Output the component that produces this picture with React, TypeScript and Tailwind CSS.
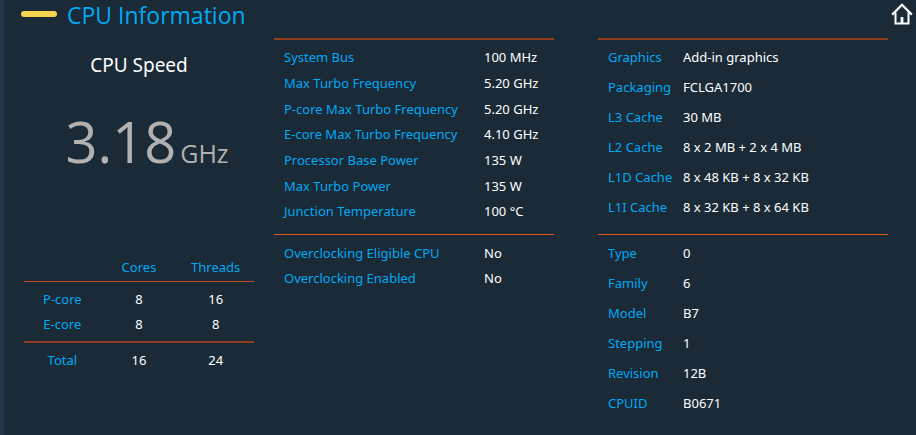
import clsx from "clsx";
import React from "react";

type Item = [label: string, value: string];

const frequencies: Item[] = [
  ["System Bus", "100 MHz"],
  ["Max Turbo Frequency", "5.20 GHz"],
  ["P-core Max Turbo Frequency", "5.20 GHz"],
  ["E-core Max Turbo Frequency", "4.10 GHz"],
  ["Processor Base Power", "135 W"],
  ["Max Turbo Power", "135 W"],
  ["Junction Temperature", "100 °C"],
];

const overclocking: Item[] = [
  ["Overclocking Eligible CPU", "No"],
  ["Overclocking Enabled", "No"],
];

const packaging: Item[] = [
  ["Graphics", "Add-in graphics"],
  ["Packaging", "FCLGA1700"],
  ["L3 Cache", "30 MB"],
  ["L2 Cache", "8 x 2 MB + 2 x 4 MB"],
  ["L1D Cache", "8 x 48 KB + 8 x 32 KB"],
  ["L1I Cache", "8 x 32 KB + 8 x 64 KB"],
];

const identity: Item[] = [
  ["Type", "0"],
  ["Family", "6"],
  ["Model", "B7"],
  ["Stepping", "1"],
  ["Revision", "12B"],
  ["CPUID", "B0671"],
];

const HomeIcon = () => (
  <svg viewBox="0 0 22 22" className="size-[22px]" fill="none" stroke="currentColor" aria-hidden="true">
    <path d="M1.2 11.6 11 1.8l9.8 9.8" strokeWidth="2.2" />
    <path d="M4.5 9.5v10.9h13V9.5" strokeWidth="2" />
    <path d="M9.6 14h2.8v6.4H9.6z" fill="currentColor" stroke="none" />
  </svg>
);

interface InfoListProps {
  items: Item[];
  className?: string;
  rowClassName?: string;
  labelClassName?: string;
}

const InfoList = ({ items, className, rowClassName, labelClassName }: InfoListProps) => (
  <dl className={clsx("flex flex-col pl-[10px]", className)}>
    {items.map(([label, value]) => (
      <div key={label} className={clsx("flex items-center whitespace-nowrap", rowClassName)}>
        <dt className={clsx("shrink-0 text-[#00a9f4]", labelClassName)}>{label}</dt>
        <dd>{value}</dd>
      </div>
    ))}
  </dl>
);

const CoreTable = () => (
  <table className="w-full table-fixed border-separate border-spacing-0 text-center leading-[25px]">
    <thead>
      <tr className="text-[#00a9f4]">
        <td className="border-b border-[#c8501e]"></td>
        <th scope="col" className="border-b border-[#c8501e] pb-px font-normal">Cores</th>
        <th scope="col" className="border-b border-[#c8501e] pb-px font-normal">Threads</th>
      </tr>
    </thead>
    <tbody>
      <tr>
        <th scope="row" className="pt-[5px] font-normal text-[#00a9f4]">P-core</th>
        <td className="pt-[5px]">8</td>
        <td className="pt-[5px]">16</td>
      </tr>
      <tr>
        <th scope="row" className="pb-1 font-normal text-[#00a9f4]">E-core</th>
        <td className="pb-1">8</td>
        <td className="pb-1">8</td>
      </tr>
    </tbody>
    <tfoot>
      <tr>
        <th scope="row" className="border-t-2 border-[#8d3f20] pt-[5px] font-normal text-[#00a9f4]">Total</th>
        <td className="border-t-2 border-[#8d3f20] pt-[5px]">16</td>
        <td className="border-t-2 border-[#8d3f20] pt-[5px]">24</td>
      </tr>
    </tfoot>
  </table>
);

const App = () => {
  return (
    <div className="min-h-screen border-l-4 border-[#25364a] bg-[#1a2a37] font-['Noto_Sans','Open_Sans',sans-serif] text-[13px] text-white">
      <header className="flex h-[38px] items-start pr-[3px] pl-[17px]">
        <span className="mt-[11px] h-[6px] w-9 rounded-full bg-[#f5d44f]"></span>
        <h1 className="ml-[10px] font-['Open_Sans',sans-serif] text-[23px] leading-[30px] text-[#00a9f4]">
          CPU Information
        </h1>
        <button type="button" aria-label="Home" className="mt-[3px] ml-auto">
          <HomeIcon />
        </button>
      </header>
      <main className="flex pr-7 pl-5">
        <section className="flex flex-[230] flex-col">
          <h2 className="mt-3 text-center text-[19px] leading-[30px]">CPU Speed</h2>
          <p className="mt-[26px] mb-[62px] pl-4 text-center font-['Open_Sans',sans-serif] leading-[70px] text-[#b1b1b1]">
            <span className="text-[56px]">3.18</span>
            <span className="ml-1 text-[25px]">GHz</span>
          </p>
          <CoreTable />
        </section>
        <div className="ml-5 grid flex-[614] grid-cols-[280fr_290fr] gap-x-11">
          <section className="flex flex-col border-t-2 border-[#8d3f20]">
            <InfoList
              items={frequencies}
              className="flex-1 pt-[5px] pb-[9px]"
              rowClassName="flex-1"
              labelClassName="w-[200px]"
            />
          </section>
          <section className="border-t-2 border-[#8d3f20]">
            <InfoList
              items={packaging}
              className="pt-[2px] pb-3"
              rowClassName="leading-[30px]"
              labelClassName="w-[75px]"
            />
          </section>
          <section className="border-t border-[#e0531c]">
            <InfoList
              items={overclocking}
              className="pt-[6px]"
              rowClassName="leading-[25px]"
              labelClassName="w-[200px]"
            />
          </section>
          <section className="border-t border-[#e0531c]">
            <InfoList
              items={identity}
              className="pt-[3px]"
              rowClassName="leading-[30px]"
              labelClassName="w-[75px]"
            />
          </section>
        </div>
      </main>
    </div>
  );
};

export default App;
